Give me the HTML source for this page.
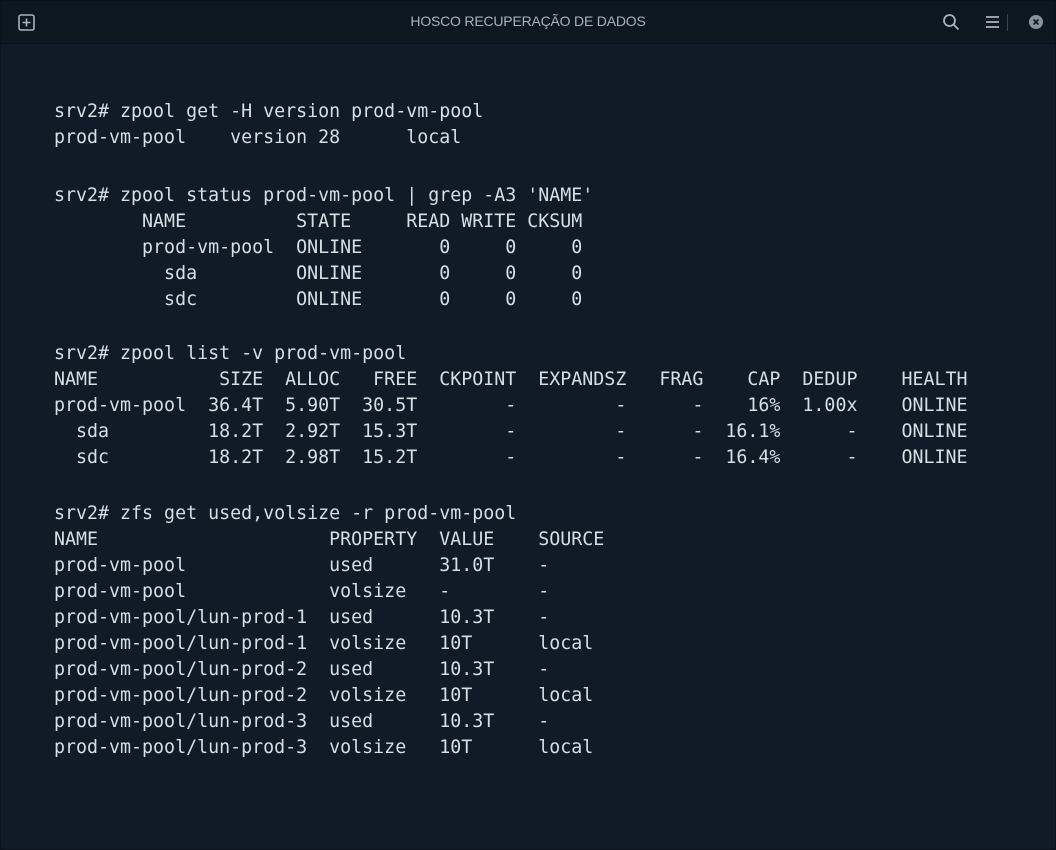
<!DOCTYPE html>
<html><head><meta charset="utf-8"><style>
html,body{margin:0;padding:0;width:1056px;height:850px;overflow:hidden;background:#0a131b;}
.win{position:absolute;left:1px;top:1px;width:1054px;height:848px;background:#101b27;border-radius:4px;overflow:hidden;}
.bar{position:absolute;left:0;top:0;width:1054px;height:42px;background:#0c1720;border-bottom:1px solid #060d13;}
.title{position:absolute;left:0;width:1054px;top:12px;text-align:center;color:#a9b3bd;font:14px "Liberation Sans",sans-serif;letter-spacing:-0.2px}
pre{position:absolute;left:54px;margin:0;font:18.3px/26px "DejaVu Sans Mono","Liberation Mono",monospace;color:#d6dee6;}
</style></head><body>
<div class="win">
<div class="bar">
<svg style="position:absolute;left:17px;top:13px" width="17" height="17" viewBox="0 0 17 17"><rect x="1" y="1" width="15" height="15" rx="2" fill="none" stroke="#a9b3bd" stroke-width="1.6"/><path d="M8.5 4.5v8M4.5 8.5h8" stroke="#a9b3bd" stroke-width="1.6"/></svg>
<div class="title">HOSCO RECUPERAÇÃO DE DADOS</div>
<svg style="position:absolute;left:941px;top:12px" width="18" height="18" viewBox="0 0 18 18"><circle cx="7.5" cy="7.5" r="5.5" fill="none" stroke="#a9b3bd" stroke-width="1.8"/><path d="M11.5 11.5l5 5" stroke="#a9b3bd" stroke-width="1.8"/></svg>
<svg style="position:absolute;left:984px;top:14px" width="16" height="14" viewBox="0 0 16 14"><path d="M1 2h13M1 7h13M1 12h13" stroke="#a9b3bd" stroke-width="1.8"/></svg>
<div style="position:absolute;left:1006px;top:13px;width:1px;height:17px;background:#3a4550"></div>
<svg style="position:absolute;left:1027px;top:13px" width="16" height="16" viewBox="0 0 16 16"><circle cx="8" cy="8" r="7" fill="#8a939c"/><path d="M5.5 5.5l5 5M10.5 5.5l-5 5" stroke="#0c1720" stroke-width="1.6"/></svg>
</div>
<pre style="top:98px;left:53px">srv2# zpool get -H version prod-vm-pool
prod-vm-pool    version 28      local</pre>
<pre style="top:182px;left:53px">srv2# zpool status prod-vm-pool | grep -A3 'NAME'
        NAME          STATE     READ WRITE CKSUM
        prod-vm-pool  ONLINE       0     0     0
          sda         ONLINE       0     0     0
          sdc         ONLINE       0     0     0</pre>
<pre style="top:340px;left:53px">srv2# zpool list -v prod-vm-pool
NAME           SIZE  ALLOC   FREE  CKPOINT  EXPANDSZ   FRAG    CAP  DEDUP    HEALTH
prod-vm-pool  36.4T  5.90T  30.5T        -         -      -    16%  1.00x    ONLINE
  sda         18.2T  2.92T  15.3T        -         -      -  16.1%      -    ONLINE
  sdc         18.2T  2.98T  15.2T        -         -      -  16.4%      -    ONLINE</pre>
<pre style="top:500px;left:53px">srv2# zfs get used,volsize -r prod-vm-pool
NAME                     PROPERTY  VALUE    SOURCE
prod-vm-pool             used      31.0T    -
prod-vm-pool             volsize   -        -
prod-vm-pool/lun-prod-1  used      10.3T    -
prod-vm-pool/lun-prod-1  volsize   10T      local
prod-vm-pool/lun-prod-2  used      10.3T    -
prod-vm-pool/lun-prod-2  volsize   10T      local
prod-vm-pool/lun-prod-3  used      10.3T    -
prod-vm-pool/lun-prod-3  volsize   10T      local</pre>
</div>
</body></html>
